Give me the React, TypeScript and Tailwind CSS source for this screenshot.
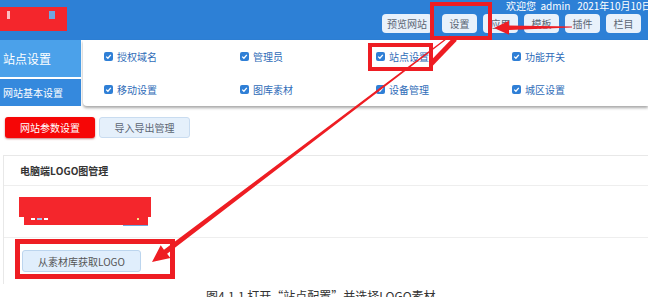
import React from 'react';

const menuItems = [
  ['授权域名', '管理员', '站点设置', '功能开关'],
  ['移动设置', '图库素材', '设备管理', '城区设置'],
];

const topButtons = ['设置', '应用', '模板', '插件', '栏目'];

const Check = () => (
  <span className="w-[9px] h-[9px] rounded-[2px] bg-[#2f7fd6] flex items-center justify-center shrink-0">
    <svg width="7" height="7" viewBox="0 0 7 7">
      <path d="M1.2 3.6 L2.9 5.2 L5.8 1.8" fill="none" stroke="#fff" strokeWidth="1.3" />
    </svg>
  </span>
);

// tapered arrow: start (thin) -> tip
const arrowPoints = (sx: number, sy: number, tx: number, ty: number, w0: number, w1: number, hl: number, hw: number) => {
  const dx = tx - sx;
  const dy = ty - sy;
  const len = Math.hypot(dx, dy);
  const ux = dx / len;
  const uy = dy / len;
  const nx = -uy;
  const ny = ux;
  const bx = tx - ux * hl;
  const by = ty - uy * hl;
  const pts = [
    [sx + nx * w0, sy + ny * w0],
    [bx + nx * w1, by + ny * w1],
    [bx + nx * hw, by + ny * hw],
    [tx, ty],
    [bx - nx * hw, by - ny * hw],
    [bx - nx * w1, by - ny * w1],
    [sx - nx * w0, sy - ny * w0],
  ];
  return pts.map((p) => p.join(',')).join(' ');
};

const Annotations = () => (
  <svg className="absolute inset-0 pointer-events-none" width="648" height="297" viewBox="0 0 648 297">
    <g fill="none" stroke="#ee1d23">
      <rect x="432" y="4" width="58" height="34" strokeWidth="4" />
      <rect x="370" y="45" width="61" height="24" strokeWidth="4" />
      <rect x="17.5" y="241.5" width="155" height="35" strokeWidth="5" />
      <line x1="455" y1="39" x2="431" y2="64" strokeWidth="5" />
    </g>
    <polygon fill="#ee1d23" points={arrowPoints(572, 27, 494, 28, 0.6, 2.2, 15, 7)} />
    <polygon fill="#ee1d23" points={arrowPoints(450, 36, 152, 262, 0.5, 2.6, 17, 8)} />
  </svg>
);

export default function App() {
  return (
    <div className="relative w-[648px] h-[297px] overflow-hidden bg-white font-['Noto_Sans_CJK_SC','Noto_Sans',sans-serif]">
      {/* Header */}
      <div className="h-[40px] bg-[#2d80d6] flex justify-between">
        <div className="mt-[7px] w-[67px] h-[24px] bg-[#f4262c] relative">
          <span className="absolute left-[7px] top-[4px] w-[3px] h-[8px] bg-white/70" />
          <span className="absolute left-[49px] top-[4px] w-[6px] h-[8px] bg-[#6fa8e0]" />
        </div>
        <div className="w-[267px] flex flex-col">
          <div className="pl-[125px] text-[10px] leading-[11px] text-white whitespace-nowrap">
            欢迎您&nbsp; admin&nbsp;&nbsp; 2021年10月10日
          </div>
          <div className="mt-[3px] flex items-center pl-[1px]">
            <span className="w-[50px] h-[19px] rounded-[4px] bg-[#e8f1fb] text-[#5b6573] text-[10px] flex items-center justify-center">
              预览网站
            </span>
            <div className="ml-[10px] flex gap-[6px]">
              {topButtons.map((b) => (
                <span
                  key={b}
                  className="w-[35px] h-[19px] rounded-[4px] bg-[#e8f1fb] text-[#5b6573] text-[10px] flex items-center justify-center"
                >
                  {b}
                </span>
              ))}
            </div>
          </div>
        </div>
      </div>

      {/* Sidebar + dropdown */}
      <div className="h-[66px] flex">
        <div className="w-[84px] flex flex-col">
          <div className="h-[37px] bg-[#4ba1ea] text-white text-[12px] flex items-center pl-[3px]">站点设置</div>
          <div className="h-[2px] bg-white" />
          <div className="h-[27px] bg-[#3589dd] text-white text-[10px] flex items-center pl-[3px]">网站基本设置</div>
        </div>
        <div className="ml-[2px] flex-1 bg-white rounded-bl-[4px] shadow-[0_2px_3px_rgba(0,0,0,0.35)] flex flex-col justify-around pl-[21px]">
          {menuItems.map((row, i) => (
            <div key={i} className="grid grid-cols-[136px_136px_136px_136px]">
              {row.map((m) => (
                <div key={m} className="flex items-center gap-[4px] text-[10px] text-[#2f6cb8]">
                  <Check />
                  {m}
                </div>
              ))}
            </div>
          ))}
        </div>
      </div>

      {/* Tabs */}
      <div className="mt-[11px] flex pl-[5px] gap-[4px]">
        <span className="w-[90px] h-[21px] rounded-[3px] bg-[#f60606] shadow-[0_1px_2px_rgba(150,0,0,0.5)] text-white text-[10px] flex items-center justify-center">
          网站参数设置
        </span>
        <span className="w-[91px] h-[21px] rounded-[3px] bg-[#e5f0fb] border border-[#c9dcf0] text-[#5b6573] text-[10px] flex items-center justify-center">
          导入导出管理
        </span>
      </div>

      {/* Card */}
      <div className="mt-[17px] ml-[3px] border border-r-0 border-b-0 border-[#e8e8e8]">
        <div className="h-[30px] flex items-center pl-[16px] text-[10px] font-bold text-[#333] border-b border-[#eeeeee]">
          电脑端LOGO图管理
        </div>
        <div className="h-[52px] pt-[11px] pl-[15px] border-b border-[#eeeeee]">
          <div className="relative w-[132px] h-[28px]">
            <div className="w-[132px] h-[20px] bg-[#f4262c]" />
            <div className="ml-[5px] w-[124px] h-[8px] bg-[#f4262c] relative">
              <span className="absolute left-[7px] top-[1px] w-[4px] h-[2px] bg-white" />
              <span className="absolute left-[13px] top-[1px] w-[5px] h-[2px] bg-[#9cc3ea]" />
              <span className="absolute left-[20px] top-[1px] w-[4px] h-[2px] bg-white" />
              <span className="absolute left-[113px] top-[1px] w-[2px] h-[2px] bg-[#f7e08a]" />
            </div>
            <div className="ml-[104px] w-[25px] h-[1px] bg-[#6fa8e0]" />
          </div>
        </div>
        <div className="h-[46px] pt-[12px] pl-[18px]">
          <span className="w-[119px] h-[22px] rounded-[3px] bg-[#e0eefc] border border-[#bcd5ee] text-[#555] text-[10px] flex items-center justify-center">
            从素材库获取LOGO
          </span>
        </div>
      </div>

      {/* Caption */}
      <div className="pl-[206px] pt-[4px] text-[12px] leading-[16px] text-[#333] whitespace-nowrap">
        图4.1.1 打开“站点配置”并选择LOGO素材
      </div>

      <Annotations />
    </div>
  );
}
